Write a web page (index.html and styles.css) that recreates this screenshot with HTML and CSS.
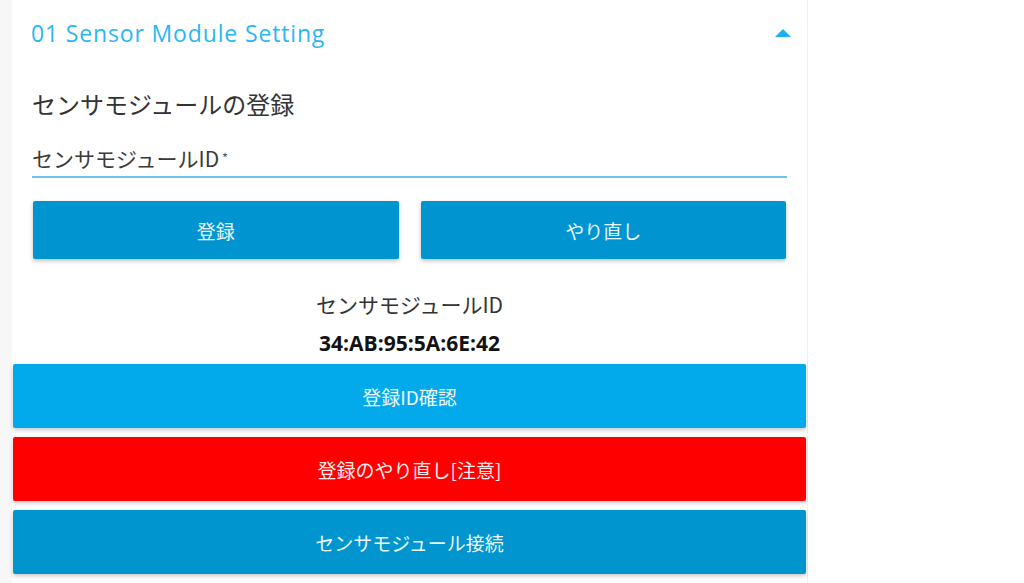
FILE: index.html
```html
<!DOCTYPE html>
<html lang="ja">
<head>
<meta charset="utf-8">
<title>Sensor Module Setting</title>
<link rel="stylesheet" href="styles.css">
</head>
<body>
<div class="page">
  <div class="gutter"></div>
  <main class="panel">
    <header class="panel-header">
      <h1 class="panel-title">01 Sensor Module Setting</h1>
      <span class="caret" aria-hidden="true"></span>
    </header>
    <section class="panel-body">
      <h2 class="section-title">センサモジュールの登録</h2>
      <div class="field">
        <label class="field-label">センサモジュールID<span class="req"> *</span></label>
      </div>
      <div class="btn-row">
        <button class="btn btn-primary">登録</button>
        <button class="btn btn-primary">やり直し</button>
      </div>
      <div class="info">
        <div class="info-label">センサモジュールID</div>
        <div class="info-value">34:AB:95:5A:6E:42</div>
      </div>
    </section>
    <div class="actions">
      <button class="action action-light">登録ID確認</button>
      <button class="action action-danger">登録のやり直し[注意]</button>
      <button class="action action-dark">センサモジュール接続</button>
    </div>
  </main>
  <div class="rest"></div>
</div>
</body>
</html>
```
FILE: styles.css
```css
* { box-sizing: border-box; }
html, body { margin: 0; padding: 0; }
body {
  background: #ffffff;
  font-family: "Open Sans", "Noto Sans CJK JP", sans-serif;
  color: #333333;
  height: 583px;
  overflow: hidden;
}
.page {
  display: flex;
  height: 583px;
}
.gutter {
  width: 12px;
  background: #f7f7f7;
  flex: none;
}
.panel {
  width: 796px;
  flex: none;
  background: #ffffff;
  border-right: 1px solid #efefef;
}
.rest { flex: 1; background: #ffffff; }

.panel-header {
  height: 66px;
  display: flex;
  align-items: center;
  justify-content: space-between;
  padding: 0 16px 0 19px;
}
.panel-title {
  margin: 0;
  font-family: "Open Sans", "Noto Sans CJK JP", sans-serif;
  font-weight: 400;
  font-size: 23px;
  letter-spacing: 0.85px;
  color: #2bb6f4;
}
.caret {
  width: 0;
  height: 0;
  border-left: 8px solid transparent;
  border-right: 8px solid transparent;
  border-bottom: 8px solid #1cb0f5;
}

.panel-body {
  padding: 0 20px 0 20px;
}
.section-title {
  margin: 23px 0 0 0;
  font-family: "Noto Sans CJK JP", sans-serif;
  font-weight: 400;
  font-size: 24px;
  line-height: 30px;
  color: #333333;
}
.field {
  margin-top: 25px;
  padding-bottom: 4px;
  border-bottom: 2px solid #6cc3eb;
}
.field-label {
  display: block;
  font-family: "Noto Sans CJK JP", sans-serif;
  font-size: 21px;
  line-height: 28px;
  color: #3a3a3a;
}
.req { font-size: 13px; vertical-align: top; color: #555; }

.btn-row {
  margin-top: 23px;
  display: flex;
  gap: 22px;
  padding: 0 1px;
}
.btn {
  flex: 1;
  height: 58px;
  border: none;
  border-radius: 2px;
  font-family: "Noto Sans CJK JP", sans-serif;
  font-size: 19px;
  color: #e8f6fc;
  box-shadow: 0 2px 4px rgba(0,0,0,0.25);
}
.btn-primary { background: #0095d0; }

.info {
  text-align: center;
}
.info-label {
  margin-top: 31px;
  font-family: "Noto Sans CJK JP", sans-serif;
  font-size: 21px;
  line-height: 28px;
  color: #333333;
}
.info-value {
  margin-top: 13px;
  font-family: "Open Sans", sans-serif;
  font-weight: 700;
  font-size: 21px;
  line-height: 25px;
  color: #111111;
}

.actions {
  margin: 8px 1px 0 1px;
  display: flex;
  flex-direction: column;
  gap: 9px;
}
.action {
  height: 64px;
  border: none;
  border-radius: 2px;
  font-family: "Noto Sans CJK JP", sans-serif;
  font-size: 19px;
  color: #eef8fd;
  box-shadow: 0 2px 4px rgba(0,0,0,0.22);
}
.action-light { background: #02aaeb; }
.action-danger { background: #ff0000; color: #ffecec; }
.action-dark { background: #0095cf; }
```
